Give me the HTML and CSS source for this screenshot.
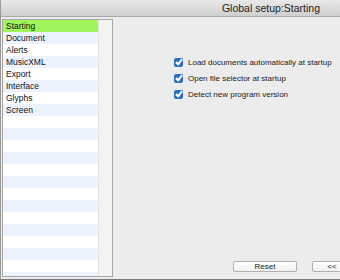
FILE: index.html
```html
<!DOCTYPE html>
<html>

<head>
    <title>Global setup</title>
    <link rel="stylesheet" href="styles.css">
</head>

<body>
    <div class="window">
        <div class="titlebar">Global setup:Starting</div>
        <div class="main">
            <div class="list">
                <div class="items">
                    <div class="item selected">Starting</div>
                    <div class="item">Document</div>
                    <div class="item">Alerts</div>
                    <div class="item">MusicXML</div>
                    <div class="item">Export</div>
                    <div class="item">Interface</div>
                    <div class="item">Glyphs</div>
                    <div class="item">Screen</div>
                    <div class="item"></div>
                    <div class="item"></div>
                    <div class="item"></div>
                    <div class="item"></div>
                    <div class="item"></div>
                    <div class="item"></div>
                    <div class="item"></div>
                    <div class="item"></div>
                    <div class="item"></div>
                    <div class="item"></div>
                    <div class="item"></div>
                    <div class="item"></div>
                    <div class="item"></div>
                    <div class="item"></div>
                </div>
                <div class="scroll"></div>
            </div>
            <div class="content">
                <div class="options">
                    <label class="option"><span class="check"></span>Load documents automatically at startup</label>
                    <label class="option"><span class="check"></span>Open file selector at startup</label>
                    <label class="option"><span class="check"></span>Detect new program version</label>
                </div>
                <div class="buttons">
                    <div class="button reset">Reset</div>
                    <div class="button back">&lt;&lt;</div>
                </div>
            </div>
        </div>
    </div>
</body>

</html>
```

FILE: styles.css
```css
body {
    margin: 0;
    font-family: "Liberation Sans", Arial, sans-serif;
    overflow: hidden;
}

.window {
    width: 340px;
    height: 280px;
    box-sizing: border-box;
    display: flex;
    flex-direction: column;
    background-color: #ececec;
    border-left: 1px solid #9a9a9a;
    border-bottom: 1px solid #7a7a7a;
}

.titlebar {
    height: 17px;
    flex-shrink: 0;
    box-sizing: border-box;
    border-bottom: 1px solid #a8a8a8;
    background: linear-gradient(#e9e9e9, #cfcfcf);
    text-align: right;
    padding-right: 20px;
    font-size: 10.5px;
    line-height: 16px;
    color: #222222;
}

.main {
    flex: 1;
    display: flex;
    min-height: 0;
    padding: 2px 0 2px 1px;
}

.list {
    width: 109px;
    flex-shrink: 0;
    display: flex;
    border: 1px solid #a6a6a6;
    overflow: hidden;
    background-color: #ffffff;
}

.items {
    width: 95px;
}

.item {
    height: 12px;
    line-height: 12px;
    font-size: 8.5px;
    padding-left: 3px;
    color: #111111;
}

.item:nth-child(even) {
    background-color: #edf3fe;
}

.item.selected {
    background-color: #a0f55c;
}

.scroll {
    flex: 1;
    background-color: #f3f3f3;
    border-left: 1px solid #e2e2e2;
}

.content {
    flex: 1;
    display: flex;
    flex-direction: column;
}

.options {
    margin-top: 37px;
    padding-left: 61px;
    display: flex;
    flex-direction: column;
    gap: 4px;
}

.option {
    display: flex;
    align-items: center;
    height: 12px;
    font-size: 8px;
    color: #1a1a1a;
    white-space: nowrap;
}

.check {
    width: 9px;
    height: 9px;
    border-radius: 2px;
    margin-right: 5px;
    background-color: #2d6fc8;
    position: relative;
}

.check::after {
    content: "";
    position: absolute;
    left: 3px;
    top: 0px;
    width: 2px;
    height: 5px;
    border: solid #ffffff;
    border-width: 0 2px 2px 0;
    transform: rotate(40deg);
}

.buttons {
    margin-top: auto;
    margin-bottom: 5px;
    display: flex;
    padding-left: 120px;
    gap: 15px;
}

.button {
    height: 11px;
    box-sizing: border-box;
    border: 1px solid #b0b0b0;
    border-radius: 2px;
    background: linear-gradient(#ffffff, #f0f0f0);
    font-size: 8px;
    line-height: 9px;
    text-align: center;
    color: #222222;
}

.reset {
    width: 64px;
}

.back {
    width: 40px;
    flex-shrink: 0;
}
```
